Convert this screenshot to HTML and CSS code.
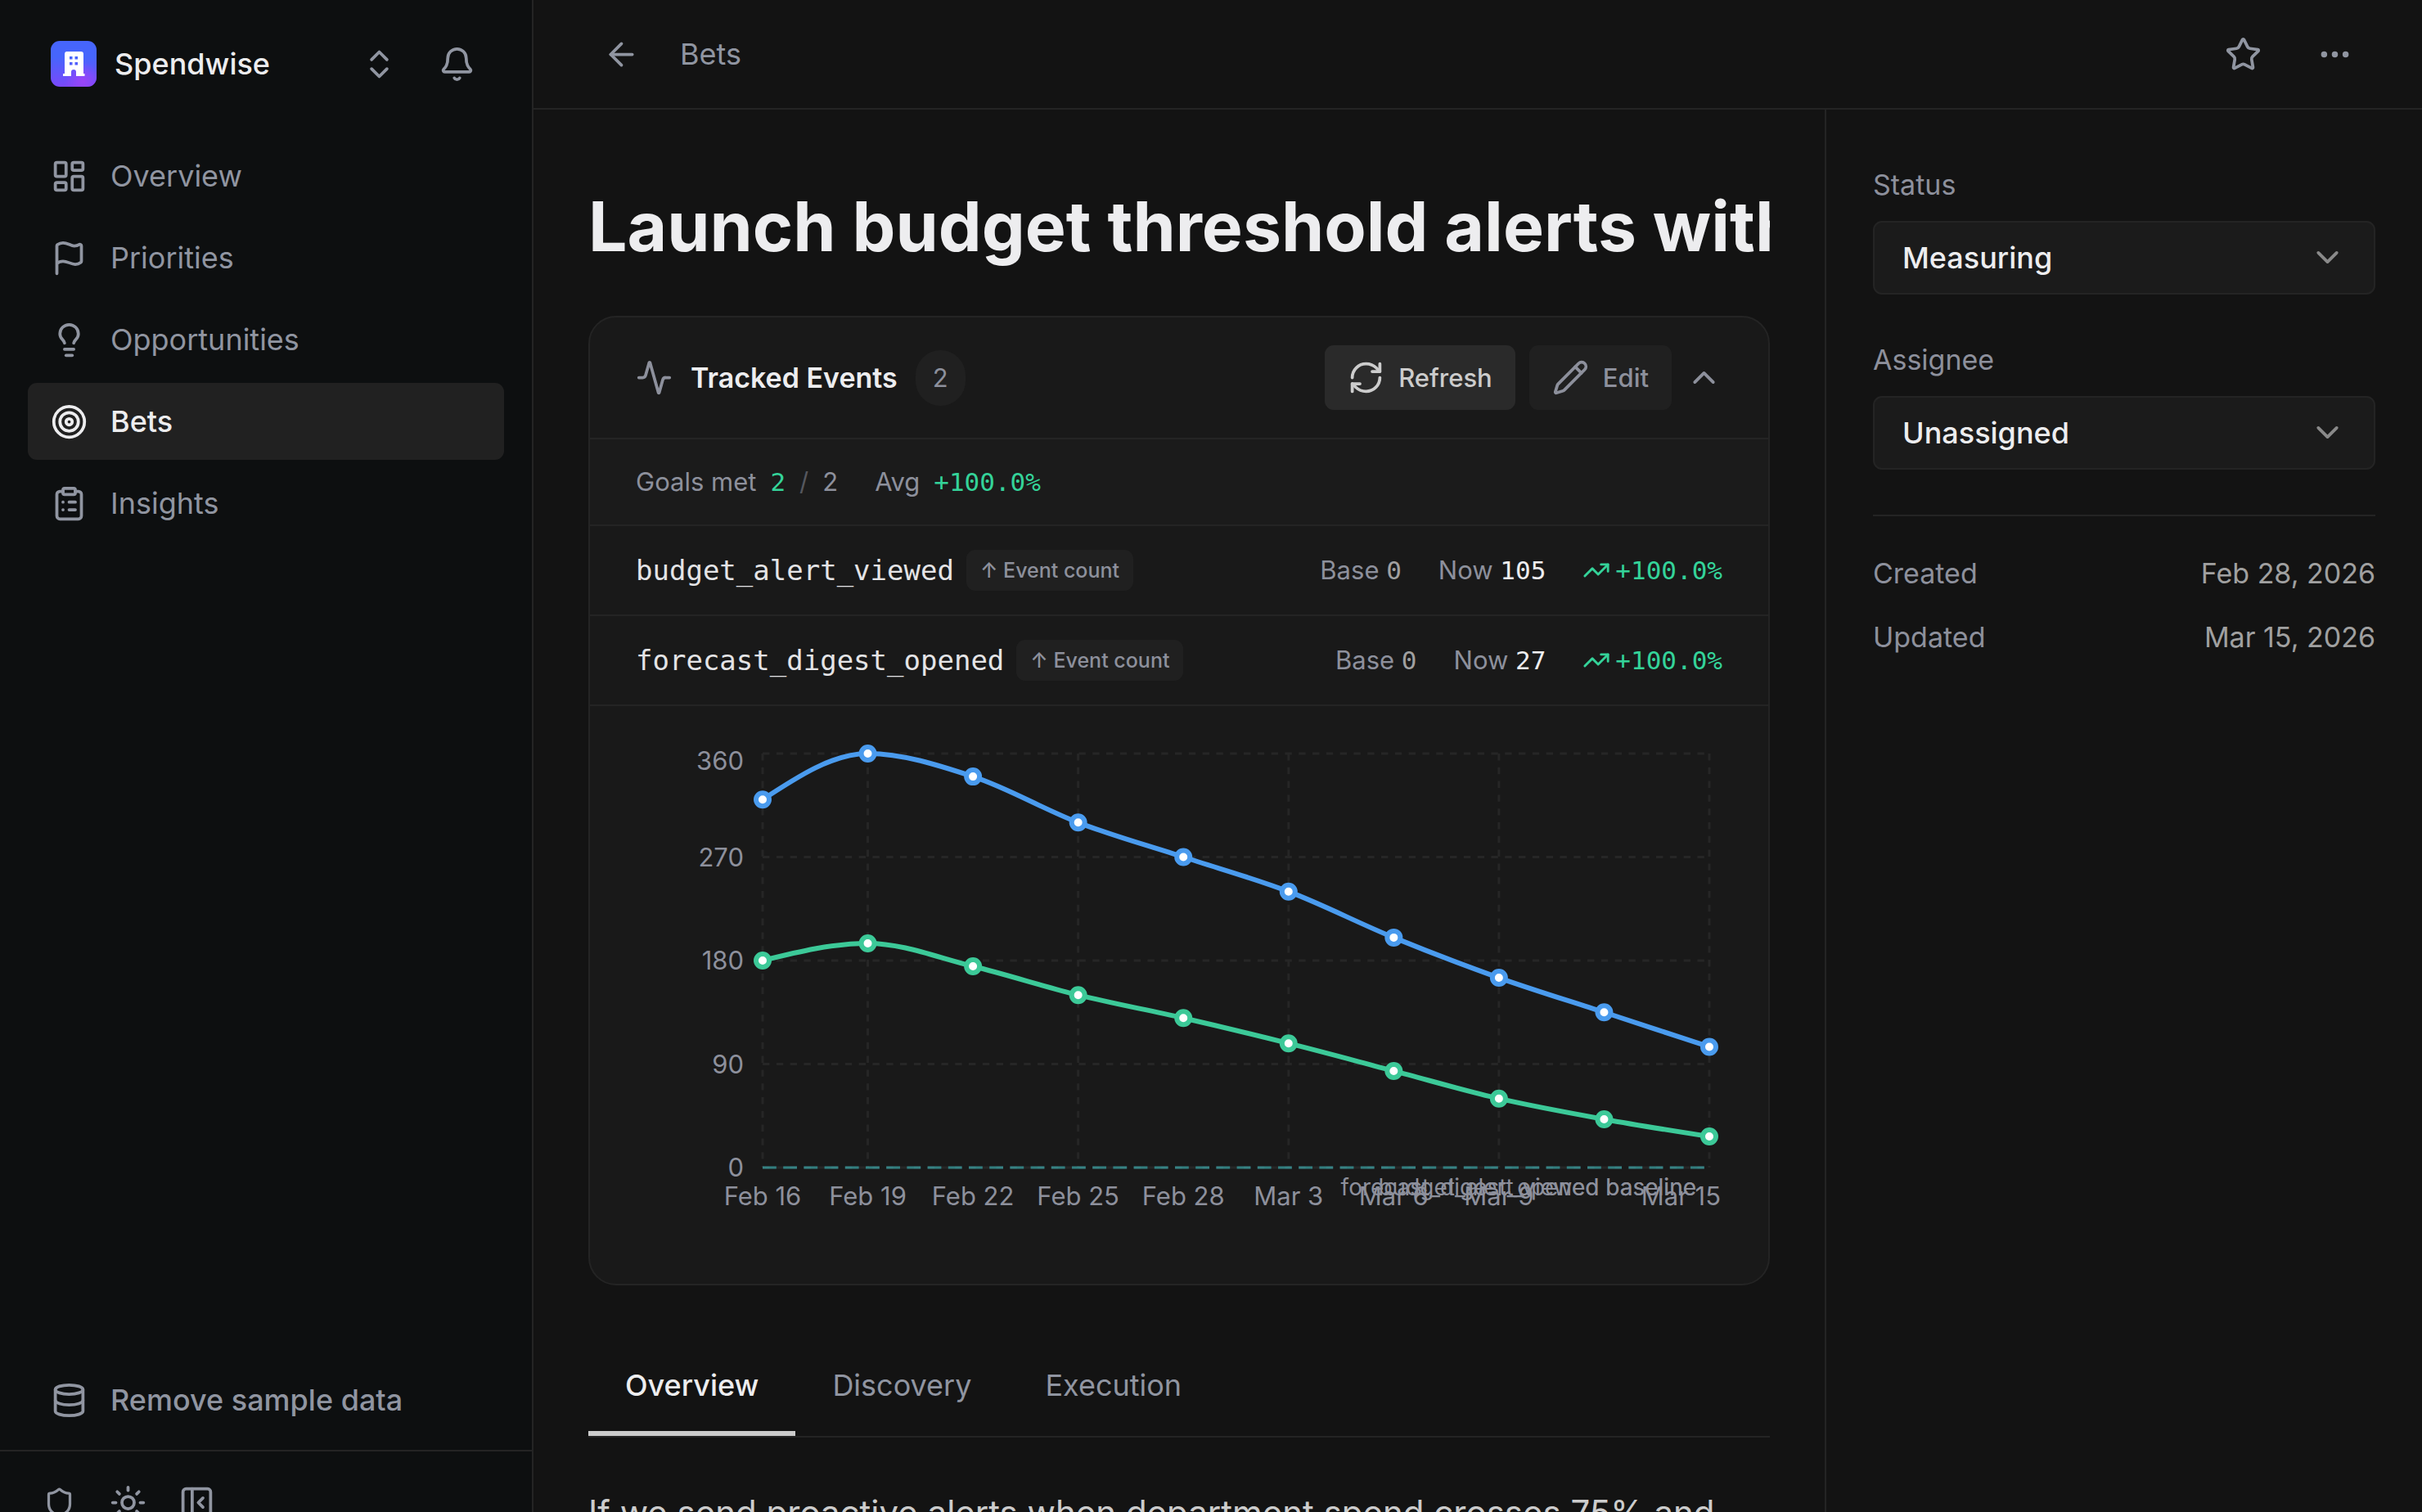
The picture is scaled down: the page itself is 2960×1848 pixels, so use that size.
FILE: index.html
```
<!DOCTYPE html>
<html lang="en">
<head>
    <meta charset="UTF-8">
    <meta name="viewport" content="width=device-width, initial-scale=1.0">
    <title>Spendwise - Bets</title>
    <link rel="stylesheet" href="styles.css">
</head>
<body>
    <div class="app">
        <aside class="sidebar">
            <div class="workspace">
                <button type="button" class="workspace-switch">
                    <svg class="logo" viewBox="0 0 56 56" aria-hidden="true">
                        <defs>
                            <linearGradient id="logoBase" x1="0" y1="0" x2="0" y2="1">
                                <stop offset="0.35" stop-color="#4665fc"/>
                                <stop offset="1" stop-color="#7a48fb"/>
                            </linearGradient>
                            <radialGradient id="logoGlow" cx="0.7" cy="0.88" r="0.4">
                                <stop offset="0" stop-color="#9a45f8"/>
                                <stop offset="1" stop-color="#9a45f8" stop-opacity="0"/>
                            </radialGradient>
                        </defs>
                        <rect width="56" height="56" rx="11" fill="url(#logoBase)"/>
                        <rect width="56" height="56" rx="11" fill="url(#logoGlow)"/>
                        <path fill="#fff" fill-rule="evenodd" d="M19 13h18a3 3 0 0 1 3 3v24h1.500v3H31v-5a3 3 0 0 0-6 0v5H15v-3h2V16a3 3 0 0 1 2-3zM23 19v3.500h3.500V19zM29.500 19v3.500H33V19zM23 26v3.500h3.500V26zM29.500 26v3.500H33V26z"/>
                    </svg>
                    <span class="workspace-name">Spendwise</span>
                    <svg class="icon" viewBox="0 0 24 24"><path d="m7 15 5 5 5-5"/><path d="m7 9 5-5 5 5"/></svg>
                </button>
                <button type="button" class="icon-btn" aria-label="Notifications">
                    <svg class="icon" viewBox="0 0 24 24"><path d="M10.268 21a2 2 0 0 0 3.464 0"/><path d="M3.262 15.326A1 1 0 0 0 4 17h16a1 1 0 0 0 .74-1.673C19.410 13.956 18 12.499 18 8A6 6 0 0 0 6 8c0 4.499-1.411 5.956-2.738 7.326"/></svg>
                </button>
            </div>

            <nav class="nav">
                <a href="#" class="nav-item">
                    <svg class="icon" viewBox="0 0 24 24"><rect width="7" height="9" x="3" y="3" rx="1"/><rect width="7" height="5" x="14" y="3" rx="1"/><rect width="7" height="9" x="14" y="12" rx="1"/><rect width="7" height="5" x="3" y="16" rx="1"/></svg>
                    Overview
                </a>
                <a href="#" class="nav-item">
                    <svg class="icon" viewBox="0 0 24 24"><path d="M4 22V4a1 1 0 0 1 .4-.8A6 6 0 0 1 8 2c3 0 5 2 7.333 2q2 0 3.067-.8A1 1 0 0 1 20 4v10a1 1 0 0 1-.4.8A6 6 0 0 1 16 16c-3 0-5-2-8-2a6 6 0 0 0-4 1.528"/></svg>
                    Priorities
                </a>
                <a href="#" class="nav-item">
                    <svg class="icon" viewBox="0 0 24 24"><path d="M15 14c.2-1 .7-1.700 1.500-2.500 1-.9 1.500-2.200 1.500-3.500A6 6 0 0 0 6 8c0 1 .2 2.200 1.500 3.500.7.7 1.300 1.500 1.500 2.500"/><path d="M9 18h6"/><path d="M10 22h4"/></svg>
                    Opportunities
                </a>
                <a href="#" class="nav-item active">
                    <svg class="icon" viewBox="0 0 24 24"><circle cx="12" cy="12" r="10"/><circle cx="12" cy="12" r="6"/><circle cx="12" cy="12" r="2"/></svg>
                    Bets
                </a>
                <a href="#" class="nav-item">
                    <svg class="icon" viewBox="0 0 24 24"><rect width="8" height="4" x="8" y="2" rx="1"/><path d="M16 4h2a2 2 0 0 1 2 2v14a2 2 0 0 1-2 2H6a2 2 0 0 1-2-2V6a2 2 0 0 1 2-2h2"/><path d="M12 11h4"/><path d="M12 16h4"/><path d="M8 11h.01"/><path d="M8 16h.01"/></svg>
                    Insights
                </a>
            </nav>

            <button type="button" class="nav-item sample-data">
                <svg class="icon" viewBox="0 0 24 24"><ellipse cx="12" cy="5" rx="9" ry="3"/><path d="M3 5v14a9 3 0 0 0 18 0V5"/><path d="M3 12a9 3 0 0 0 18 0"/></svg>
                Remove sample data
            </button>

            <div class="sidebar-footer">
                <button type="button" class="icon-btn" aria-label="Privacy">
                    <svg class="icon icon-small" viewBox="0 0 24 24"><path d="M20 13c0 5-3.500 7.500-7.660 8.950a1 1 0 0 1-.67-.01C7.500 20.500 4 18 4 13V6a1 1 0 0 1 1-1c2 0 4.500-1.200 6.240-2.720a1.170 1.170 0 0 1 1.520 0C14.510 3.810 17 5 19 5a1 1 0 0 1 1 1z"/></svg>
                </button>
                <button type="button" class="icon-btn" aria-label="Theme">
                    <svg class="icon" viewBox="0 0 24 24"><circle cx="12" cy="12" r="4"/><path d="M12 2v2"/><path d="M12 20v2"/><path d="m4.930 4.930 1.410 1.410"/><path d="m17.660 17.660 1.410 1.410"/><path d="M2 12h2"/><path d="M20 12h2"/><path d="m6.340 17.660-1.410 1.410"/><path d="m19.070 4.930-1.410 1.410"/></svg>
                </button>
                <button type="button" class="icon-btn" aria-label="Collapse sidebar">
                    <svg class="icon" viewBox="0 0 24 24"><rect width="18" height="18" x="3" y="3" rx="2"/><path d="M9 3v18"/><path d="m16 15-3-3 3-3"/></svg>
                </button>
            </div>
        </aside>

        <div class="page">
            <header class="topbar">
                <button type="button" class="icon-btn" aria-label="Back">
                    <svg class="icon" viewBox="0 0 24 24"><path d="m12 19-7-7 7-7"/><path d="M19 12H5"/></svg>
                </button>
                <a href="#" class="crumb">Bets</a>
                <div class="topbar-actions">
                    <button type="button" class="icon-btn" aria-label="Favorite">
                        <svg class="icon" viewBox="0 0 24 24"><path d="M11.525 2.295a.53.53 0 0 1 .95 0l2.310 4.679a2.123 2.123 0 0 0 1.595 1.160l5.166.756a.53.53 0 0 1 .294.904l-3.736 3.638a2.123 2.123 0 0 0-.611 1.878l.882 5.140a.53.53 0 0 1-.771.560l-4.618-2.428a2.122 2.122 0 0 0-1.973 0L6.396 21.010a.53.53 0 0 1-.770-.560l.881-5.139a2.122 2.122 0 0 0-.611-1.879L2.160 9.795a.53.53 0 0 1 .294-.906l5.165-.755a2.122 2.122 0 0 0 1.597-1.160z"/></svg>
                    </button>
                    <button type="button" class="icon-btn" aria-label="More">
                        <svg class="icon" viewBox="0 0 24 24"><circle cx="12" cy="12" r="1"/><circle cx="19" cy="12" r="1"/><circle cx="5" cy="12" r="1"/></svg>
                    </button>
                </div>
            </header>

            <div class="columns">
                <main class="content">
                    <h1 class="title">Launch budget threshold alerts with</h1>

                    <section class="card">
                        <div class="card-header">
                            <svg class="icon" viewBox="0 0 24 24"><path d="M22 12h-2.480a2 2 0 0 0-1.930 1.460l-2.350 8.360a.25.25 0 0 1-.48 0L9.240 2.180a.25.25 0 0 0-.48 0l-2.350 8.360A2 2 0 0 1 4.490 12H2"/></svg>
                            <h2 class="card-title">Tracked Events</h2>
                            <span class="count">2</span>
                            <div class="card-actions">
                                <button type="button" class="btn btn-primary">
                                    <svg class="icon" viewBox="0 0 24 24"><path d="M3 12a9 9 0 0 1 9-9 9.750 9.750 0 0 1 6.740 2.740L21 8"/><path d="M21 3v5h-5"/><path d="M21 12a9 9 0 0 1-9 9 9.750 9.750 0 0 1-6.740-2.740L3 16"/><path d="M8 16H3v5"/></svg>
                                    Refresh
                                </button>
                                <button type="button" class="btn">
                                    <svg class="icon" viewBox="0 0 24 24"><path d="M21.174 6.812a1 1 0 0 0-3.986-3.987L3.842 16.174a2 2 0 0 0-.5.83l-1.321 4.352a.5.5 0 0 0 .623.622l4.353-1.320a2 2 0 0 0 .83-.497z"/><path d="m15 5 4 4"/></svg>
                                    Edit
                                </button>
                                <button type="button" class="collapse" aria-label="Collapse">
                                    <svg class="icon" viewBox="0 0 24 24"><path d="m18 15-6-6-6 6"/></svg>
                                </button>
                            </div>
                        </div>

                        <div class="summary">
                            <div class="summary-item">
                                <span>Goals met</span>
                                <span class="mono up">2</span>
                                <span class="slash">/</span>
                                <span>2</span>
                            </div>
                            <div class="summary-item">
                                <span>Avg</span>
                                <span class="mono up">+100.0%</span>
                            </div>
                        </div>

                        <div class="event">
                            <span class="event-name mono">budget_alert_viewed</span>
                            <span class="tag">↑ Event count</span>
                            <div class="event-stats">
                                <span>Base <span class="mono base">0</span></span>
                                <span>Now <span class="mono now">105</span></span>
                                <span class="trend mono up">
                                    <svg class="icon" viewBox="0 0 24 24"><path d="M16 7h6v6"/><path d="m22 7-8.500 8.500-5-5L2 17"/></svg>
                                    +100.0%
                                </span>
                            </div>
                        </div>
                        <div class="event">
                            <span class="event-name mono">forecast_digest_opened</span>
                            <span class="tag">↑ Event count</span>
                            <div class="event-stats">
                                <span>Base <span class="mono base">0</span></span>
                                <span>Now <span class="mono now">27</span></span>
                                <span class="trend mono up">
                                    <svg class="icon" viewBox="0 0 24 24"><path d="M16 7h6v6"/><path d="m22 7-8.500 8.500-5-5L2 17"/></svg>
                                    +100.0%
                                </span>
                            </div>
                        </div>

                        <div class="chart">
                            <svg id="chart" viewBox="0 0 1328 652" role="img" aria-label="Event counts over time"></svg>
                        </div>
                    </section>

                    <div class="tabs" role="tablist">
                        <button type="button" class="tab active" role="tab" aria-selected="true">Overview</button>
                        <button type="button" class="tab" role="tab" aria-selected="false">Discovery</button>
                        <button type="button" class="tab" role="tab" aria-selected="false">Execution</button>
                    </div>

                    <p class="hypothesis">If we send proactive alerts when department spend crosses 75% and</p>
                </main>

                <aside class="details">
                    <div class="field">
                        <label for="status">Status</label>
                        <div class="select-wrap">
                            <select id="status">
                                <option>Measuring</option>
                            </select>
                            <svg class="icon select-arrow" viewBox="0 0 24 24"><path d="m6 9 6 6 6-6"/></svg>
                        </div>
                    </div>
                    <div class="field">
                        <label for="assignee">Assignee</label>
                        <div class="select-wrap">
                            <select id="assignee">
                                <option>Unassigned</option>
                            </select>
                            <svg class="icon select-arrow" viewBox="0 0 24 24"><path d="m6 9 6 6 6-6"/></svg>
                        </div>
                    </div>
                    <dl class="dates">
                        <div class="date-row">
                            <dt>Created</dt>
                            <dd>Feb 28, 2026</dd>
                        </div>
                        <div class="date-row">
                            <dt>Updated</dt>
                            <dd>Mar 15, 2026</dd>
                        </div>
                    </dl>
                </aside>
            </div>
        </div>
    </div>

    <script src="chart.js"></script>
</body>
</html>
```
FILE: styles.css
```
* {
    box-sizing: border-box;
}
body {
    margin: 0;
    height: 100vh;
    overflow: hidden;
    background-color: #131313;
    color: #ededef;
    font-family: Inter, sans-serif;
    font-size: 36px;
    line-height: 54px;
}
button,
select {
    font: inherit;
    color: inherit;
    background: none;
    border: none;
    padding: 0;
    cursor: pointer;
}
a {
    color: inherit;
    text-decoration: none;
}
h1,
h2,
p,
dl,
dd {
    margin: 0;
}
.icon {
    flex: none;
    width: 45px;
    height: 45px;
    fill: none;
    stroke: currentColor;
    stroke-width: 2;
    stroke-linecap: round;
    stroke-linejoin: round;
}
.icon-small {
    width: 39px;
    height: 39px;
}
.icon-btn {
    display: flex;
    align-items: center;
    justify-content: center;
    width: 84px;
    height: 84px;
    color: #9095a1;
}
.mono {
    font-family: "DejaVu Sans Mono", monospace;
}
.up {
    color: #34d399;
}
.app {
    display: flex;
    height: calc(100vh + 50px);
}

/* sidebar */
.sidebar {
    display: flex;
    flex-direction: column;
    flex: none;
    width: 652px;
    border-right: 2px solid #242424;
    background-color: #0d0f10;
}
.workspace {
    display: flex;
    align-items: center;
    padding: 36px 50px 36px 62px;
}
.workspace-switch {
    display: flex;
    flex: 1;
    align-items: center;
    gap: 22px;
    padding-right: 30px;
    color: #9095a1;
}
.logo {
    width: 56px;
    height: 56px;
}
.workspace-name {
    flex: 1;
    color: #ededef;
    font-weight: 500;
    text-align: left;
}
.nav {
    display: flex;
    flex-direction: column;
    gap: 6px;
    padding: 12px 34px;
}
.nav-item {
    display: flex;
    align-items: center;
    gap: 28px;
    height: 94px;
    padding: 0 28px;
    border-radius: 11px;
    color: #9095a1;
}
.nav-item.active {
    background-color: #212121;
    color: #ededef;
    font-weight: 500;
}
.sample-data {
    margin: auto 34px 14px;
    font-weight: 500;
}
.sidebar-footer {
    display: flex;
    padding: 20px 30px;
    border-top: 2px solid #242424;
}

/* page */
.page {
    display: flex;
    flex: 1;
    flex-direction: column;
    min-width: 0;
}
.topbar {
    display: flex;
    flex: none;
    align-items: center;
    gap: 30px;
    height: 134px;
    padding: 0 65px;
    border-bottom: 2px solid #242424;
    color: #9095a1;
}
.topbar-actions {
    display: flex;
    gap: 28px;
    margin-left: auto;
}
.columns {
    display: flex;
    flex: 1;
}
.content {
    flex: 1;
    min-width: 0;
    padding: 92px 67px;
}
.title {
    margin-bottom: 58px;
    overflow: hidden;
    font-size: 84px;
    font-weight: 700;
    line-height: 102px;
    white-space: nowrap;
}

/* tracked events */
.card {
    border: 2px solid #242424;
    border-radius: 34px;
    background-color: #191919;
    font-size: 31px;
    line-height: 46px;
    color: #8d909c;
    overflow: hidden;
}
.card-header {
    display: flex;
    align-items: center;
    gap: 22px;
    padding: 34px 56px;
    border-bottom: 2px solid #242424;
}
.card-title {
    color: #ededef;
    font-size: 34px;
    font-weight: 600;
}
.count {
    padding: 11px 21px;
    border-radius: 34px;
    background-color: #202020;
}
.card-actions {
    display: flex;
    align-items: center;
    gap: 17px;
    margin-left: auto;
}
.btn {
    display: flex;
    align-items: center;
    gap: 17px;
    height: 79px;
    padding: 0 28px;
    border-radius: 11px;
    background-color: #202020;
    font-weight: 500;
}
.btn-primary {
    background-color: #2a2a2a;
    color: #cccccc;
}
.collapse {
    display: flex;
}
.summary {
    display: flex;
    gap: 45px;
    padding: 29px 56px;
    border-bottom: 2px solid #242424;
    background-color: #1b1b1b;
}
.summary-item {
    display: flex;
    gap: 17px;
}
.slash {
    color: #55575e;
}
.event {
    display: flex;
    align-items: center;
    gap: 15px;
    height: 110px;
    padding: 0 56px;
    border-bottom: 2px solid #242424;
}
.event-name {
    color: #e4e4e6;
    font-size: 34px;
}
.tag {
    padding: 2px 17px;
    border-radius: 11px;
    background-color: #202020;
    font-size: 25px;
    font-weight: 500;
}
.event-stats {
    display: flex;
    gap: 45px;
    margin-left: auto;
}
.base {
    color: #a0a0a0;
}
.now {
    color: #ededef;
}
.trend {
    display: flex;
    align-items: center;
    gap: 6px;
}
.trend .icon {
    width: 34px;
    height: 34px;
}

/* chart */
.chart {
    padding: 27px 56px;
}
.chart svg {
    display: block;
    width: 100%;
    overflow: visible;
}
.chart text {
    fill: #8d909c;
    font-size: 31px;
}
.chart .baseline-label {
    font-size: 28px;
}
.grid-line {
    stroke: #262626;
    stroke-width: 3;
    stroke-dasharray: 8.4 8.4;
}
.baseline {
    stroke-width: 3;
    stroke-dasharray: 16.8 8.4;
    opacity: 0.4;
}
.series {
    fill: none;
    stroke-width: 6;
}
.point {
    fill: #fff;
    stroke-width: 6;
}

/* tabs */
.tabs {
    display: flex;
    margin-top: 78px;
    border-bottom: 2px solid #242424;
    color: #9095a1;
}
.tab {
    padding: 17px 45px 29px;
    border-bottom: 6px solid transparent;
}
.tab.active {
    border-color: #cccccc;
    color: #ededef;
    font-weight: 500;
}
.hypothesis {
    margin-top: 60px;
    color: #cccccc;
    font-size: 42px;
    line-height: 64px;
}

/* details */
.details {
    flex: none;
    width: 730px;
    padding: 67px 57px;
    border-left: 2px solid #242424;
    color: #8d909c;
    font-size: 34px;
    line-height: 50px;
}
.field {
    margin-bottom: 55px;
}
.field label {
    display: block;
    margin-bottom: 19px;
}
.select-wrap {
    position: relative;
}
.select-wrap select {
    appearance: none;
    display: block;
    width: 100%;
    height: 90px;
    padding: 0 34px;
    border: 2px solid #242424;
    border-radius: 11px;
    background-color: #1b1b1b;
    color: #ededef;
    font-size: 36px;
    font-weight: 500;
}
.select-arrow {
    position: absolute;
    top: 22px;
    right: 36px;
    color: #8a8a8a;
    pointer-events: none;
}
.dates {
    padding-top: 45px;
    border-top: 2px solid #242424;
}
.date-row {
    display: flex;
    justify-content: space-between;
    margin-bottom: 28px;
}
.date-row dd {
    color: #a0a0a0;
}
```
FILE: chart.js
```
var svg = document.getElementById("chart");
var labels = ["Feb 16", "Feb 19", "Feb 22", "Feb 25", "Feb 28", "Mar 3", "Mar 6", "Mar 9", "", "Mar 15"];
var series = [
    { name: "budget_alert_viewed", color: "#4a9bee", values: [320, 360, 340, 300, 270, 240, 200, 165, 135, 105] },
    { name: "forecast_digest_opened", color: "#3cc998", values: [180, 195, 175, 150, 130, 108, 84, 60, 42, 27] }
];
var left = 155, right = 1312, top0 = 31, bottom = 537, max = 360;

function x(i) {
    return left + (right - left) * i / 9;
}
function y(v) {
    return bottom - (bottom - top0) * v / max;
}
function add(tag, attrs, text) {
    var el = document.createElementNS("http://www.w3.org/2000/svg", tag);
    for (var key in attrs) {
        el.setAttribute(key, attrs[key]);
    }
    if (text) {
        el.textContent = text;
    }
    svg.appendChild(el);
}

// monotone cubic through the points
function curve(values) {
    var step = x(1) - x(0);
    var s = [];
    for (var i = 0; i < values.length - 1; i++) {
        s.push((y(values[i + 1]) - y(values[i])) / step);
    }
    var t = values.map(function(v, i) {
        if (i === 0 || i === values.length - 1) {
            return 0;
        }
        var a = s[i - 1], b = s[i];
        return (Math.sign(a) + Math.sign(b)) * Math.min(Math.abs(a), Math.abs(b), Math.abs(a + b) / 4);
    });
    var n = values.length - 1;
    t[0] = (3 * s[0] - t[1]) / 2;
    t[n] = (3 * s[n - 1] - t[n - 1]) / 2;
    var d = "M" + x(0) + "," + y(values[0]);
    for (var j = 0; j < n; j++) {
        d += "C" + (x(j) + step / 3) + "," + (y(values[j]) + t[j] * step / 3) + " " +
            (x(j + 1) - step / 3) + "," + (y(values[j + 1]) - t[j + 1] * step / 3) + " " +
            x(j + 1) + "," + y(values[j + 1]);
    }
    return d;
}

[0, 90, 180, 270, 360].forEach(function(v) {
    add("line", { class: "grid-line", x1: left, x2: right, y1: y(v), y2: y(v) });
    add("text", { x: left - 23, y: y(v) + (v === max ? 20 : 11), "text-anchor": "end" }, String(v));
});
[0, 1, 3, 5, 7, 9].forEach(function(i) {
    add("line", { class: "grid-line", x1: x(i), x2: x(i), y1: top0, y2: bottom });
});
labels.forEach(function(label, i) {
    if (i === 9) {
        add("text", { x: 1326, y: bottom + 46, "text-anchor": "end" }, label);
    } else if (label) {
        add("text", { x: x(i), y: bottom + 46, "text-anchor": "middle" }, label);
    }
});
series.forEach(function(line) {
    add("line", { class: "baseline", stroke: line.color, x1: left, x2: right, y1: bottom, y2: bottom });
    add("text", { class: "baseline-label", x: right - 16, y: bottom + 34, "text-anchor": "end" }, line.name + " baseline");
});
series.forEach(function(line) {
    add("path", { class: "series", stroke: line.color, d: curve(line.values) });
    line.values.forEach(function(v, i) {
        add("circle", { class: "point", stroke: line.color, cx: x(i), cy: y(v), r: 8 });
    });
});
```
